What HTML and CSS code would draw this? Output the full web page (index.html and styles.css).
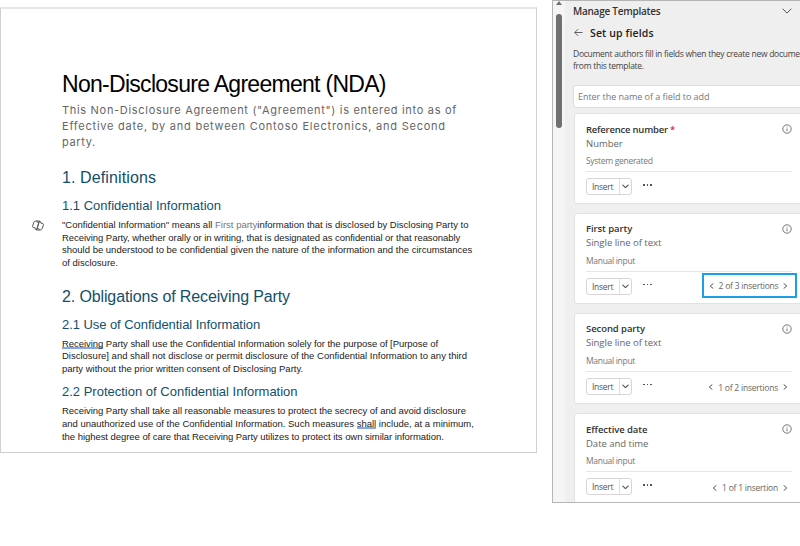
FILE: index.html
```html
<!DOCTYPE html>
<html lang="en">
<head>
<meta charset="utf-8">
<title>Non-Disclosure Agreement (NDA)</title>
<link rel="stylesheet" href="styles.css">
</head>
<body>
<svg class="defs" aria-hidden="true">
  <symbol id="info" viewBox="0 0 10 10"><circle cx="5" cy="5" r="4.2"/><path d="M5 4.5v2.7M5 2.7v.8"/></symbol>
  <symbol id="down" viewBox="0 0 10 6"><path d="M.6 .7 5 5.1 9.4.7"/></symbol>
  <symbol id="left" viewBox="0 0 5 8"><path d="M4.3 1.500 1.200 4l3.100 2.500"/></symbol>
  <symbol id="right" viewBox="0 0 5 8"><path d="M.7 1.500 3.800 4 .7 6.500"/></symbol>
</svg>
<main class="document">
  <div class="gutter">
    <svg class="copilot" viewBox="0 0 12 11"><path d="M4.200 1h3.200L4.900 9.200c-.2.700-.9.800-1.300.300L3 7.700H2C.8 7.700.4 7 .7 5.900l.9-3C2 1.600 2.800 1 4.200 1zM7.800 10H4.600L7.100 1.800c.2-.7.900-.8 1.300-.3L9 3.300h1c1.200 0 1.600.7 1.300 1.800l-.9 3C10 9.400 9.200 10 7.800 10zM4.200 1c.9.1 1 .9 1.200 1.900M7.800 10c-.9-.1-1-.9-1.200-1.900"/></svg>
  </div>
  <article class="content">
    <h1 class="title">Non-Disclosure Agreement (NDA)</h1>
    <p class="intro"><span class="i1">This Non-Disclosure Agreement ("Agreement") is entered into as of</span><span class="i2">Effective date, by and between Contoso Electronics, and Second</span><span class="i3">party.</span></p>
    <h2 class="section first">1. Definitions</h2>
    <h3 class="clause">1.1 Confidential Information</h3>
    <p class="body"><span>"Confidential Information" means all <em>First party</em>information that is disclosed by Disclosing Party to</span><span class="tight">Receiving Party, whether orally or in writing, that is designated as confidential or that reasonably</span><span>should be understood to be confidential given the nature of the information and the circumstances</span><span>of disclosure.</span></p>
    <h2 class="section second">2. Obligations of Receiving Party</h2>
    <h3 class="clause use">2.1 Use of Confidential Information</h3>
    <p class="body"><span class="tight"><u>Receiving</u> Party shall use the Confidential Information solely for the purpose of [Purpose of</span><span>Disclosure] and shall not disclose or permit disclosure of the Confidential Information to any third</span><span>party without the prior written consent of Disclosing Party.</span></p>
    <h3 class="clause protection">2.2 Protection of Confidential Information</h3>
    <p class="body"><span class="tight">Receiving Party shall take all reasonable measures to protect the secrecy of and avoid disclosure</span><span>and unauthorized use of the Confidential Information. Such measures <u>shall</u> include, at a minimum,</span><span class="tight">the highest degree of care that Receiving Party utilizes to protect its own similar information.</span></p>
  </article>
</main>
<aside class="panel">
  <div class="track"><i class="arrow"></i><i class="thumb"></i></div>
  <div class="pane">
    <header class="bar"><h2>Manage Templates</h2><svg class="collapse"><use href="#down"/></svg></header>
    <div class="heading"><svg class="back" viewBox="0 0 10 9"><path d="M4.500.8.8 4.500l3.700 3.700M.8 4.500h8.700"/></svg><h3>Set up fields</h3></div>
    <p class="help">Document authors fill in fields when they create new docume<br>from this template.</p>
    <div class="search">Enter the name of a field to add</div>
    <section class="card short">
      <div class="name"><b class="ref">Reference number <span class="req">*</span></b><svg class="info"><use href="#info"/></svg></div>
      <div class="type">Number</div><div class="source">System generated</div>
      <div class="actions"><div class="insert"><span>Insert</span><i><svg viewBox="0 0 10 6"><use href="#down"/></svg></i></div><div class="more"><i></i><i></i><i></i></div></div>
    </section>
    <section class="card">
      <div class="name"><b>First party</b><svg class="info"><use href="#info"/></svg></div>
      <div class="type">Single line of text</div><div class="source">Manual input</div>
      <div class="actions"><div class="insert"><span>Insert</span><i><svg viewBox="0 0 10 6"><use href="#down"/></svg></i></div><div class="more"><i></i><i></i><i></i></div><div class="nav selected"><svg><use href="#left"/></svg><span>2 of 3 insertions</span><svg><use href="#right"/></svg></div></div>
    </section>
    <section class="card">
      <div class="name"><b>Second party</b><svg class="info"><use href="#info"/></svg></div>
      <div class="type">Single line of text</div><div class="source">Manual input</div>
      <div class="actions"><div class="insert"><span>Insert</span><i><svg viewBox="0 0 10 6"><use href="#down"/></svg></i></div><div class="more"><i></i><i></i><i></i></div><div class="nav"><svg><use href="#left"/></svg><span>1 of 2 insertions</span><svg><use href="#right"/></svg></div></div>
    </section>
    <section class="card">
      <div class="name"><b>Effective date</b><svg class="info"><use href="#info"/></svg></div>
      <div class="type">Date and time</div><div class="source">Manual input</div>
      <div class="actions"><div class="insert"><span>Insert</span><i><svg viewBox="0 0 10 6"><use href="#down"/></svg></i></div><div class="more"><i></i><i></i><i></i></div><div class="nav"><svg><use href="#left"/></svg><span>1 of 1 insertion</span><svg><use href="#right"/></svg></div></div>
    </section>
  </div>
</aside>
</body>
</html>
```
FILE: styles.css
```css
* { box-sizing: border-box; }
body { margin: 0; width: 800px; height: 546px; overflow: hidden; background: #fff; display: flex; align-items: flex-start; font-family: "Liberation Sans", sans-serif; white-space: nowrap; }
h1, h2, h3, p { margin: 0; font-weight: 400; }
svg { fill: none; stroke: #555; stroke-width: 1; flex: none; }
.defs { display: none; }

.document { width: 537px; height: 446px; margin-top: 7px; border: 1px solid #cfcfcf; border-top: 2px solid #e6e6e6; display: flex; }
.gutter { width: 61px; padding: 211px 0 0 30.500px; flex: none; }
.copilot { display: block; width: 12px; height: 11px; stroke-width: 1; }
.content { padding-top: 60px; }
.title { font-size: 23px; line-height: 31px; letter-spacing: -.71px; color: #000; }
.intro { padding-top: 1.500px; font-family: Inter, sans-serif; font-size: 11px; line-height: 16.3px; color: #666; }
.intro span, .body span { display: block; }
.i1 { letter-spacing: .69px; }
.i2 { letter-spacing: .765px; }
.i3 { letter-spacing: .65px; }
.section { font-size: 16px; line-height: 24px; color: #134f6b; }
.first { margin-top: 16px; letter-spacing: .108px; }
.second { margin-top: 15px; letter-spacing: -.125px; }
.clause { margin: 5.500px 0 3px; font-size: 13px; line-height: 20px; color: #134f6b; }
.use { letter-spacing: -.06px; }
.protection { margin: 6.500px 0 2.500px; }
.body { font-size: 9.5px; line-height: 12.8px; color: #222; }
.body .tight { letter-spacing: -.05px; }
.body em { font-style: normal; color: #777; }
.body u { text-decoration: none; border-bottom: 2px solid #86a6ec; display: inline-block; height: 11px; line-height: 12.8px; vertical-align: top; }

.panel { width: 248px; height: 503px; margin-left: 15px; border: solid #b5b5b5; border-width: 1px 0 1px 1px; background: #efefef; display: flex; overflow: hidden; font-family: "Open Sans", sans-serif; }
.track { width: 12px; height: 100%; background: #f5f5f5; flex: none; display: flex; flex-direction: column; align-items: center; }
.arrow { border: solid transparent; border-width: 0 3px 4px; border-bottom-color: #707070; }
.thumb { width: 6px; height: 114px; margin-top: 9px; border-radius: 3px; background: #707070; }
.pane { width: 235px; flex: none; padding-left: 8px; }
.bar { height: 20px; display: flex; align-items: center; justify-content: space-between; padding-right: 8px; }
.bar h2 { font-size: 10px; font-weight: 600; letter-spacing: -.25px; color: #333; }
.collapse { width: 10px; height: 6px; }
.heading { height: 23px; display: flex; align-items: center; gap: 7px; padding-left: 1px; }
.back { width: 9px; height: 9px; }
.heading h3 { font-size: 10.5px; font-weight: 600; letter-spacing: .13px; color: #222; }
.help { margin-top: 4px; font-size: 8.5px; line-height: 11.5px; letter-spacing: -.27px; color: #444; }
.search { width: 240px; height: 23px; margin-top: 13.500px; padding-left: 4px; border: 1px solid #ddd; border-radius: 3px; background: #fff; font-size: 9px; line-height: 21px; letter-spacing: -.04px; color: #777; }
.card { width: 240px; height: 91px; margin: 0 0 9.400px 1px; padding: 8px 20px 0 11px; border: 1px solid #e2e2e2; border-radius: 3px; background: #fff; }
.card.short { height: 90.5px; margin-top: 5.500px; margin-bottom: 9px; }
.name { height: 14px; width: 206px; display: flex; align-items: center; justify-content: space-between; }
.name b { font-size: 9.5px; font-weight: 600; letter-spacing: -.08px; color: #333; }
.name .ref { letter-spacing: -.22px; }
.req { color: #c4314b; }
.info { width: 10px; height: 10px; stroke-width: .8; }
.type { margin-top: .5px; font-size: 9.5px; line-height: 14px; letter-spacing: -.02px; color: #666; }
.source { margin-top: 3.500px; font-size: 8.5px; line-height: 14px; letter-spacing: -.3px; color: #777; }
.actions { margin-top: 3px; padding-top: 6px; border-top: 1px solid #e6e6e6; height: 30px; display: flex; align-items: flex-start; width: 206px; }
.insert { width: 46px; height: 17px; border: 1px solid #d6d6d6; border-radius: 3px; display: flex; font-size: 8.5px; line-height: 15px; letter-spacing: -.3px; color: #555; flex: none; }
.insert span { width: 32px; padding-left: 5px; }
.insert i { flex: 1; border-left: 1px solid #ddd; display: grid; place-items: center; }
.insert svg { width: 7px; height: 4.500px; stroke-width: 1.500; }
.more { display: flex; gap: 2px; margin: 6px 0 0 11px; }
.more i { width: 1.500px; height: 1.500px; background: #555; }
.nav { height: 17px; margin: 1px 4px 0 auto; display: flex; align-items: center; gap: 5px; font-size: 8.5px; letter-spacing: -.22px; color: #666; }
.nav svg { width: 5px; height: 8px; }
.nav.selected { width: 95px; height: 25px; justify-content: center; padding: 1px 2px 0 0; margin: -5px -5px 0 auto; border: 2px solid #18a0e8; background: #fff; }
```
